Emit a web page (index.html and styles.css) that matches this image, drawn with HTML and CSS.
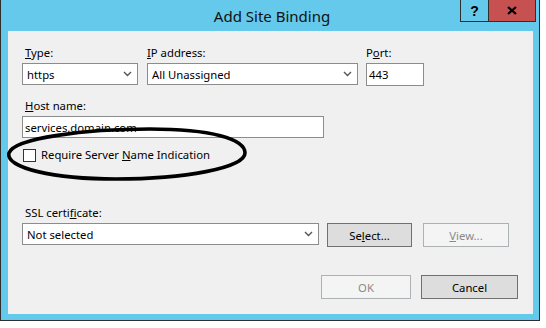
FILE: index.html
```html
<!DOCTYPE html>
<html>
<head>
<meta charset="utf-8">
<link rel="stylesheet" href="styles.css">
</head>
<body>
<div class="window">
  <div class="titlebar">
    <div class="title">Add Site Binding</div>
    <div class="caption-buttons">
      <div class="cap help">?</div>
      <div class="cap close">
        <svg width="10" height="9" viewBox="0 0 10 9"><path d="M1 1 L9 8 M9 1 L1 8" stroke="#000" stroke-width="2.2" fill="none"/></svg>
      </div>
    </div>
  </div>
  <div class="content">
    <div class="row row1">
      <div class="field f-type">
        <div class="label indent"><u>T</u>ype:</div>
        <div class="combo"><span>https</span><svg class="chev" width="9" height="6" viewBox="0 0 9 6"><path d="M1 1 L4.5 4.5 L8 1" stroke="#555" stroke-width="1.4" fill="none"/></svg></div>
      </div>
      <div class="field f-ip">
        <div class="label"><u>I</u>P address:</div>
        <div class="combo"><span>All Unassigned</span><svg class="chev" width="9" height="6" viewBox="0 0 9 6"><path d="M1 1 L4.5 4.5 L8 1" stroke="#555" stroke-width="1.4" fill="none"/></svg></div>
      </div>
      <div class="field f-port">
        <div class="label">P<u>o</u>rt:</div>
        <div class="textbox port">443</div>
      </div>
    </div>
    <div class="field f-host">
      <div class="label indent"><u>H</u>ost name:</div>
      <div class="textbox host">services.domain.com</div>
    </div>
    <div class="check-row">
      <div class="checkbox"></div>
      <div class="check-label">Require Server <u>N</u>ame Indication</div>
    </div>
    <div class="field f-ssl">
      <div class="label indent">SSL certi<u>f</u>icate:</div>
      <div class="ssl-row">
        <div class="combo ssl"><span>Not selected</span><svg class="chev" width="9" height="6" viewBox="0 0 9 6"><path d="M1 1 L4.5 4.5 L8 1" stroke="#555" stroke-width="1.4" fill="none"/></svg></div>
        <div class="btn b-select">Se<u>l</u>ect...</div>
        <div class="btn disabled b-view"><u>V</u>iew...</div>
      </div>
    </div>
    <div class="footer">
      <div class="btn disabled b-ok">OK</div>
      <div class="btn b-cancel">Cancel</div>
    </div>
    <svg class="annotation" width="246" height="60" viewBox="0 0 246 60">
      <path d="M3,27 C8,12 80,3 144,3 C205,3 239,13 239,27 C239,42 178,53 110,53 C48,53 -1,42 3,27 Z" fill="none" stroke="#000" stroke-width="3.6"/>
    </svg>
  </div>
</div>
</body>
</html>
```
FILE: styles.css
```css
html, body {
  margin: 0;
  padding: 0;
  background: #ffffff;
}
body {
  font-family: "Noto Sans", "Liberation Sans", sans-serif;
  font-size: 11.3px;
  color: #000;
}
.window {
  width: 540px;
  height: 321px;
  box-sizing: border-box;
  background: #64c9ea;
  border: 1px solid #2e2e2e;
  border-top: none;
  padding: 0 6px 6px 7px;
  display: flex;
  flex-direction: column;
}
.titlebar {
  height: 31px;
  display: grid;
  margin: 0 -6px 0 -7px;
}
.title, .caption-buttons {
  grid-area: 1 / 1;
}
.title {
  text-align: center;
  font-size: 15px;
  line-height: 20px;
  padding-top: 6px;
  padding-left: 4px;
  color: #111;
}
.caption-buttons {
  justify-self: end;
  align-self: start;
  margin-right: 3px;
  display: flex;
  border: 1px solid #2e2e2e;
  border-top: none;
  height: 21px;
}
.cap {
  display: flex;
  align-items: center;
  justify-content: center;
}
.help {
  width: 27px;
  border-right: 1px solid #2e2e2e;
  font-weight: bold;
  font-size: 14px;
  font-family: "Liberation Sans", sans-serif;
}
.close {
  width: 46px;
  background: #c75050;
}
.content {
  flex: 1;
  background: #f0f0f0;
  position: relative;
  padding: 14px 0 0 14px;
}
.label {
  height: 16px;
  line-height: 16px;
  margin-bottom: 2px;
  white-space: nowrap;
}
.indent {
  padding-left: 3px;
}
.row1 {
  display: flex;
}
.f-type { width: 116px; margin-right: 9px; }
.f-ip { width: 211px; margin-right: 8px; }
.f-port { width: 58px; }
.combo, .textbox {
  box-sizing: border-box;
  height: 22px;
  background: #fff;
  border: 1px solid #8c8c8c;
  display: flex;
  align-items: center;
  white-space: nowrap;
}
.combo {
  padding-left: 4px;
  justify-content: space-between;
}
.combo .chev {
  margin-right: 5px;
}
.textbox {
  padding-left: 2px;
}
.port {
  height: 23px;
}
.f-host {
  margin-top: 12px;
}
.host {
  width: 302px;
}
.check-row {
  margin-top: 10px;
  display: flex;
  align-items: center;
  height: 14px;
}
.checkbox {
  width: 13px;
  height: 13px;
  box-sizing: border-box;
  border: 1px solid #333;
  background: #fff;
  margin-left: 1px;
  margin-right: 5px;
}
.check-label {
  line-height: 14px;
  white-space: nowrap;
}
.f-ssl {
  margin-top: 43px;
}
.ssl-row {
  display: flex;
  align-items: flex-start;
}
.combo.ssl {
  width: 297px;
}
.btn {
  box-sizing: border-box;
  height: 24px;
  border: 1px solid #707070;
  background: #dddddd;
  display: flex;
  align-items: center;
  justify-content: center;
  white-space: nowrap;
}
.btn.disabled {
  background: #f4f4f4;
  border-color: #adb2b5;
  color: #8a8a8a;
}
.b-select { width: 85px; margin-left: 8px; }
.b-view { width: 86px; margin-left: 11px; }
.footer {
  margin-top: 28px;
  display: flex;
  justify-content: flex-end;
  padding-right: 15px;
}
.b-ok { width: 90px; margin-right: 10px; }
.b-cancel { width: 97px; }
.annotation {
  position: absolute;
  left: -2px;
  top: 95px;
}
```
